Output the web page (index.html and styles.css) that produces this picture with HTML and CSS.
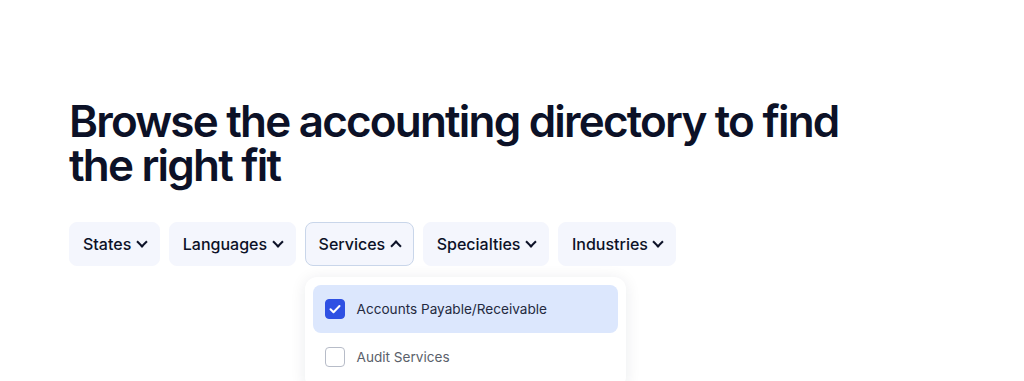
FILE: index.html
```html
<!DOCTYPE html>
<html lang="en">
<head>
    <meta charset="UTF-8">
    <meta name="viewport" content="width=device-width, initial-scale=1.0">
    <title>Accounting Directory</title>
    <link rel="stylesheet" href="styles.css">
</head>
<body>

    <section class="directory">
        <h1 class="title">Browse the accounting directory to find the right fit</h1>

        <div class="filters">
            <div class="filter">
                <button class="filter-btn">States <span class="chev"></span></button>
            </div>
            <div class="filter">
                <button class="filter-btn">Languages <span class="chev"></span></button>
            </div>
            <div class="filter open">
                <button class="filter-btn">Services <span class="chev up"></span></button>
                <div class="menu">
                    <div class="option checked">
                        <span class="box">
                            <svg width="14" height="14" viewBox="0 0 14 14"><path d="M2.5 7.3l3 3 6-6.3" fill="none" stroke="#fff" stroke-width="2" stroke-linecap="round" stroke-linejoin="round"/></svg>
                        </span>
                        <span>Accounts Payable/Receivable</span>
                    </div>
                    <div class="option">
                        <span class="box"></span>
                        <span>Audit Services</span>
                    </div>
                </div>
            </div>
            <div class="filter">
                <button class="filter-btn">Specialties <span class="chev"></span></button>
            </div>
            <div class="filter">
                <button class="filter-btn">Industries <span class="chev"></span></button>
            </div>
        </div>
    </section>

</body>
</html>
```

FILE: styles.css
```css
html, body {
    height: 100%;
}
body {
    margin: 0;
    font-family: Inter, "Noto Sans", sans-serif;
    background-color: #fff;
    color: #0c1127;
}
.directory {
    padding: 99px 69px 0;
}
.title {
    margin: 0;
    width: 820px;
    font-size: 44px;
    font-weight: 600;
    line-height: 44px;
    letter-spacing: -1.8px;
}
.filters {
    display: flex;
    gap: 9px;
    margin-top: 35px;
}
.filter {
    position: relative;
}
.filter-btn {
    display: flex;
    align-items: center;
    gap: 6.5px;
    height: 44px;
    padding: 0 13px;
    font-family: inherit;
    font-size: 16px;
    font-weight: 500;
    color: #0c1127;
    background-color: #f4f6fd;
    border: 1px solid #f4f6fd;
    border-radius: 8px;
    cursor: pointer;
}
.open .filter-btn {
    border-color: #c9d6ea;
}
.chev {
    width: 6px;
    height: 6px;
    border-right: 2px solid #0c1127;
    border-bottom: 2px solid #0c1127;
    transform: translateY(-2px) rotate(45deg);
}
.chev.up {
    transform: translateY(2px) rotate(-135deg);
}
.menu {
    position: absolute;
    z-index: 10;
    top: 55px;
    left: 0;
    width: 305px;
    padding: 8px;
    background-color: #fff;
    border-radius: 12px;
    box-shadow: 0 2px 16px rgba(20, 30, 60, 0.09);
}
.option {
    display: flex;
    align-items: center;
    gap: 12px;
    height: 48px;
    padding: 0 12px;
    font-size: 13.6px;
    color: #5b5f6b;
    border-radius: 8px;
}
.option.checked {
    background-color: #dce7fd;
    color: #242a40;
}
.box {
    display: flex;
    align-items: center;
    justify-content: center;
    width: 18px;
    height: 18px;
    border: 1px solid #b7bcc8;
    border-radius: 4px;
    background-color: #fff;
}
.checked .box {
    background-color: #2e50e3;
    border-color: #2e50e3;
}
```
